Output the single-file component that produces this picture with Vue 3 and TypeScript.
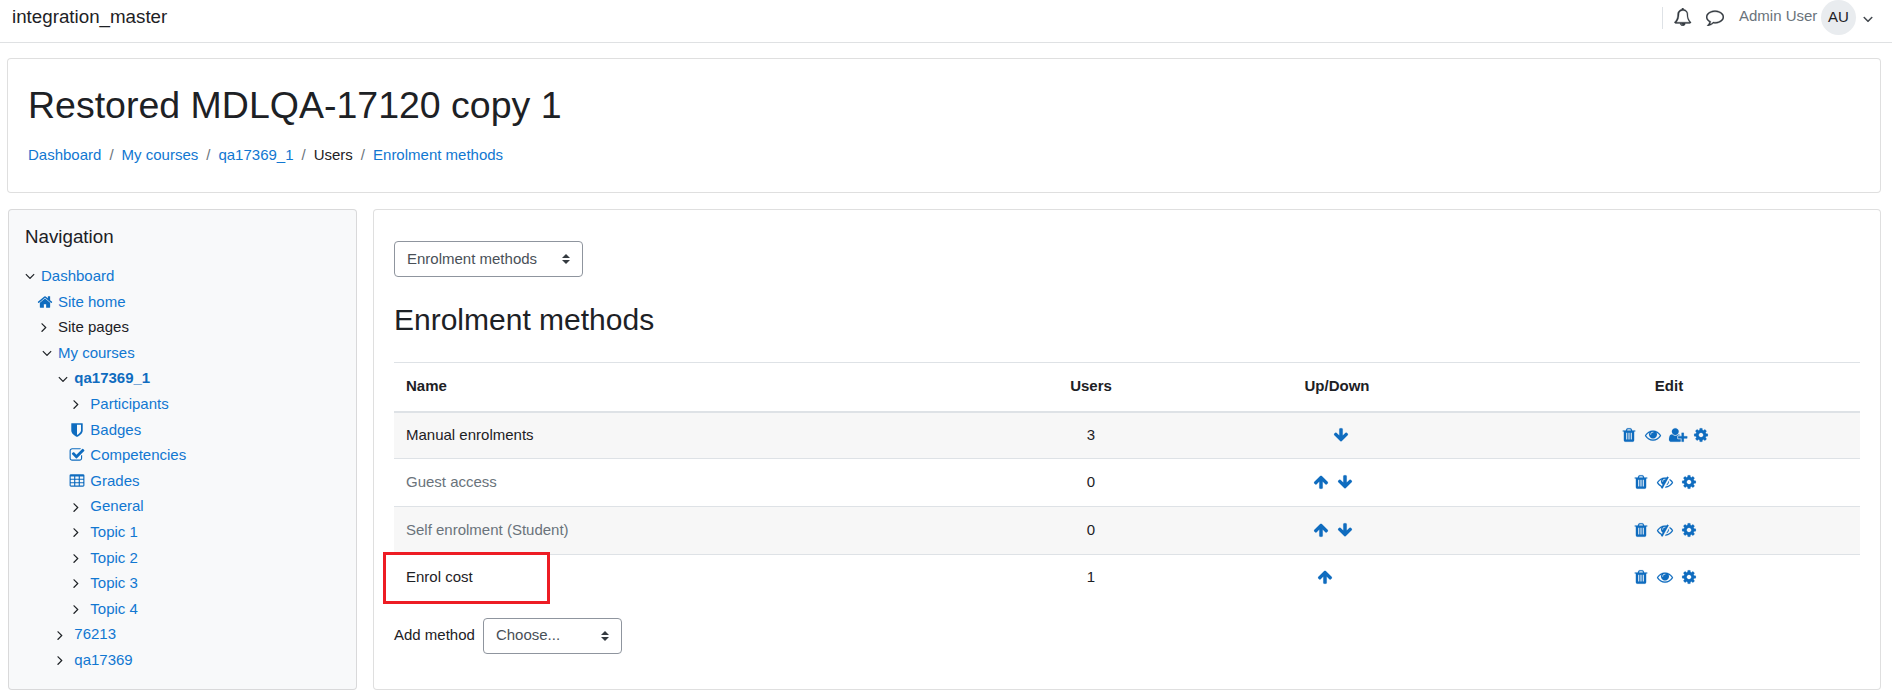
<script setup lang="ts">
type IconName =
  | 'bell' | 'comment' | 'home' | 'shield' | 'check' | 'table' | 'trash' | 'eye' | 'eyeSlash'
  | 'cog' | 'up' | 'down' | 'userPlus' | 'angleDown' | 'angleRight'

const paths: Record<IconName, string> = {
  bell: 'M912 1696q0-16-16-16-59 0-101.5-42.5t-42.5-101.5q0-16-16-16t-16 16q0 73 51.5 124.5t124.5 51.5q16 0 16-16zm-666-288h1300q-266-300-266-832 0-51-24-105t-69-103-121.5-80.5-169.5-31.5-169.5 31.5-121.5 80.5-69 103-24 105q0 532-266 832zm1454 0q0 52-38 90t-90 38h-448q0 106-75 181t-181 75-181-75-75-181h-448q-52 0-90-38t-38-90q50-42 91-88t85-119.5 74.5-158.5 50-206 19.5-260q0-152 117-282.5t307-158.5q-8-19-8-39 0-40 28-68t68-28 68 28 28 68q0 20-8 39 190 28 307 158.5t117 282.5q0 139 19.5 260t50 206 74.5 158.5 85 119.5 91 88z',
  comment: 'M896 384q-204 0-381.5 69.5t-282 187.5-104.5 255q0 112 71.5 213.5t201.5 175.5l87 50-27 96q-24 91-70 172 152-63 275-171l43-38 57 6q69 8 130 8 204 0 381.5-69.5t282-187.5 104.5-255-104.5-255-282-187.5-381.5-69.5zm896 512q0 174-120 321.5t-326 233-450 85.5q-70 0-145-8-198 175-460 242-49 14-114 22h-5q-15 0-27-10.5t-16-27.5v-1q-3-4-.5-12t2-10 4.5-9.5l6-9 7-8.5 8-9q7-8 31-34.5t34.5-38 31-39.5 32.5-51 27-59 26-76q-157-89-247.5-220t-90.5-281q0-174 120-321.5t326-233 450-85.5 450 85.5 326 233 120 321.5z',
  home: 'M1472 992v480q0 26-19 45t-45 19h-384v-384h-256v384h-384q-26 0-45-19t-19-45v-480q0-1 .5-3t.5-3l575-474 575 474q1 2 1 6zm223-69l-62 74q-8 9-21 11h-3q-13 0-21-7l-692-577-692 577q-12 8-24 7-13-2-21-11l-62-74q-8-10-7-23.5t11-21.5l719-599q32-26 76-26t76 26l244 204v-195q0-14 9-23t23-9h192q14 0 23 9t9 23v408l219 182q10 8 11 21.5t-7 23.5z',
  shield: 'M1344 960v-640h-448v1137q119-63 213-137 235-184 235-360zm192-768v768q0 86-33.5 170.5t-83 150-118 127.5-126.5 103-121 77.5-89.5 49.5-42.5 20q-12 6-26 6t-26-6q-16-7-42.5-20t-89.5-49.5-121-77.5-126.5-103-118-127.5-83-150-33.5-170.5v-768q0-26 19-45t45-19h1152q26 0 45 19t19 45z',
  check: 'M1472 930v318q0 119-84.5 203.5t-203.5 84.5h-832q-119 0-203.5-84.5t-84.5-203.5v-832q0-119 84.5-203.5t203.5-84.5h832q63 0 117 25 15 7 18 23 3 17-9 29l-49 49q-10 10-23 10-3 0-9-2-23-6-45-6h-832q-66 0-113 47t-47 113v832q0 66 47 113t113 47h832q66 0 113-47t47-113v-254q0-13 9-22l64-64q10-10 23-10 6 0 12 3 20 8 20 29zm231-489l-814 814q-24 24-57 24t-57-24l-430-430q-24-24-24-57t24-57l110-110q24-24 57-24t57 24l263 263 647-647q24-24 57-24t57 24l110 110q24 24 24 57t-24 57z',
  table: 'M576 1376v-192q0-14-9-23t-23-9h-320q-14 0-23 9t-9 23v192q0 14 9 23t23 9h320q14 0 23-9t9-23zm0-384v-192q0-14-9-23t-23-9h-320q-14 0-23 9t-9 23v192q0 14 9 23t23 9h320q14 0 23-9t9-23zm512 384v-192q0-14-9-23t-23-9h-320q-14 0-23 9t-9 23v192q0 14 9 23t23 9h320q14 0 23-9t9-23zm-512-768v-192q0-14-9-23t-23-9h-320q-14 0-23 9t-9 23v192q0 14 9 23t23 9h320q14 0 23-9t9-23zm512 384v-192q0-14-9-23t-23-9h-320q-14 0-23 9t-9 23v192q0 14 9 23t23 9h320q14 0 23-9t9-23zm512 384v-192q0-14-9-23t-23-9h-320q-14 0-23 9t-9 23v192q0 14 9 23t23 9h320q14 0 23-9t9-23zm-512-768v-192q0-14-9-23t-23-9h-320q-14 0-23 9t-9 23v192q0 14 9 23t23 9h320q14 0 23-9t9-23zm512 384v-192q0-14-9-23t-23-9h-320q-14 0-23 9t-9 23v192q0 14 9 23t23 9h320q14 0 23-9t9-23zm0-384v-192q0-14-9-23t-23-9h-320q-14 0-23 9t-9 23v192q0 14 9 23t23 9h320q14 0 23-9t9-23zm128-320v1088q0 66-47 113t-113 47h-1344q-66 0-113-47t-47-113v-1088q0-66 47-113t113-47h1344q66 0 113 47t47 113z',
  trash: 'M704 1376v-704q0-14-9-23t-23-9h-64q-14 0-23 9t-9 23v704q0 14 9 23t23 9h64q14 0 23-9t9-23zm256 0v-704q0-14-9-23t-23-9h-64q-14 0-23 9t-9 23v704q0 14 9 23t23 9h64q14 0 23-9t9-23zm256 0v-704q0-14-9-23t-23-9h-64q-14 0-23 9t-9 23v704q0 14 9 23t23 9h64q14 0 23-9t9-23zm-544-992h448l-48-117q-7-9-17-11h-317q-10 2-17 11zm928 32v64q0 14-9 23t-23 9h-96v948q0 83-47 143.5t-113 60.5h-832q-66 0-113-58.5t-47-141.5v-952h-96q-14 0-23-9t-9-23v-64q0-14 9-23t23-9h309l70-167q15-37 54-63t79-26h320q40 0 79 26t54 63l70 167h309q14 0 23 9t9 23z',
  eye: 'M1664 960q-152-236-381-353 61 104 61 225 0 185-131.5 316.5t-316.5 131.5-316.5-131.5-131.5-316.5q0-121 61-225-229 117-381 353 133 205 333.5 326.5t434.5 121.5 434.5-121.5 333.5-326.5zm-720-384q0-20-14-34t-34-14q-125 0-214.5 89.5t-89.5 214.5q0 20 14 34t34 14 34-14 14-34q0-86 61-147t147-61q20 0 34-14t14-34zm848 384q0 34-20 69-140 230-376.5 368.5t-499.5 138.5-499.5-139-376.5-368q-20-35-20-69t20-69q140-229 376.5-368t499.5-139 499.5 139 376.5 368q20 35 20 69z',
  eyeSlash: 'M555 1335l78-141q-87-63-136-159t-49-203q0-121 61-225-229 117-381 353 167 258 427 375zm389-759q0-20-14-34t-34-14q-125 0-214.5 89.5t-89.5 214.5q0 20 14 34t34 14 34-14 14-34q0-86 61-147t147-61q20 0 34-14t14-34zm363-191q0 7-1 9-106 189-316 567t-315 566l-49 89q-10 16-28 16-12 0-134-70-16-10-16-28 0-12 44-87-143-65-263.5-173t-208.5-245q-20-31-20-69t20-69q153-235 380-371t496-136q89 0 180 17l54-97q10-16 28-16 5 0 18 6t31 15.5 33 18.5 31.5 18.5 19.5 11.5q16 10 16 27zm37 447q0 139-79 253.5t-209 164.5l280-502q8 45 8 84zm448 128q0 35-20 69-39 64-109 145-150 172-347.5 267t-419.5 95l74-132q212-18 392.5-137t301.5-307q-115-179-282-294l63-112q95 64 182.5 153t144.5 184q20 34 20 69z',
  cog: 'M1152 896q0-106-75-181t-181-75-181 75-75 181 75 181 181 75 181-75 75-181zm512-109v222q0 12-8 23t-20 13l-185 28q-19 54-39 91 35 50 107 138 10 12 10 25t-9 23q-27 37-99 108t-94 71q-12 0-26-9l-138-108q-44 23-91 38-16 136-29 186-7 28-36 28h-222q-14 0-24.5-8.5t-11.5-21.5l-28-184q-49-16-90-37l-141 107q-10 9-25 9-14 0-25-11-126-114-165-168-7-10-7-23 0-12 8-23 15-21 51-66.5t54-70.5q-27-50-41-99l-183-27q-13-2-21-12.5t-8-23.5v-222q0-12 8-23t19-13l186-28q14-46 39-92-40-57-107-138-10-12-10-24 0-10 9-23 26-36 98.5-107.5t94.5-71.5q13 0 26 10l138 107q44-23 91-38 16-136 29-186 7-28 36-28h222q14 0 24.5 8.5t11.5 21.5l28 184q49 16 90 37l142-107q9-9 24-9 13 0 25 10 129 119 165 170 7 8 7 22 0 12-8 23-15 21-51 66.5t-54 70.5q26 50 41 98l183 28q13 2 21 12.5t8 23.5z',
  up: 'M1675 971q0 51-37 90l-75 75q-38 38-91 38-54 0-90-38l-294-293v704q0 52-37.5 84.5t-90.5 32.5h-128q-53 0-90.5-32.5t-37.5-84.5v-704l-294 293q-36 38-90 38t-90-38l-75-75q-38-38-38-90 0-53 38-91l651-651q35-37 90-37 54 0 91 37l651 651q37 39 37 91z',
  down: 'M1675 832q0 53-37 90l-651 652q-39 37-91 37-53 0-90-37l-651-652q-38-36-38-90 0-53 38-91l74-75q39-37 91-37 53 0 90 37l294 294v-704q0-52 38-90t90-38h128q52 0 90 38t38 90v704l294-294q37-37 90-37 52 0 91 37l75 75q37 39 37 91z',
  userPlus: 'M704 896q-159 0-271.5-112.5t-112.5-271.5 112.5-271.5 271.5-112.5 271.5 112.5 112.5 271.5-112.5 271.5-271.5 112.5zm960 128h352q13 0 22.5 9.5t9.5 22.5v192q0 13-9.5 22.5t-22.5 9.5h-352v352q0 13-9.5 22.5t-22.5 9.5h-192q-13 0-22.5-9.5t-9.5-22.5v-352h-352q-13 0-22.5-9.5t-9.5-22.5v-192q0-13 9.5-22.5t22.5-9.5h352v-352q0-13 9.5-22.5t22.5-9.5h192q13 0 22.5 9.5t9.5 22.5v352zm-736 224q0 52 38 90t90 38h256v238q-68 50-171 50h-874q-121 0-194-69t-73-190q0-53 3.5-103.5t14-109 26.5-108.5 43-97.5 62-81 85.5-53.5 111.5-20q19 0 39 17 79 61 154.5 91.5t164.5 30.5 164.5-30.5 154.5-91.5q20-17 39-17 132 0 217 96h-223q-52 0-90 38t-38 90v192z',
  angleDown: 'M1395 736q0 13-10 23l-466 466q-10 10-23 10t-23-10l-466-466q-10-10-10-23t10-23l50-50q10-10 23-10t23 10l393 393 393-393q10-10 23-10t23 10l50 50q10 10 10 23z',
  angleRight: 'M1171 960q0 13-10 23l-466 466q-10 10-23 10t-23-10l-50-50q-10-10-10-23t10-23l393-393-393-393q-10-10-10-23t10-23l50-50q10-10 23-10t23 10l466 466q10 10 10 23z',
}

interface TreeRow {
  label: string
  level: number
  icon: IconName
  link?: boolean
  bold?: boolean
}

const tree: TreeRow[] = [
  { label: 'Dashboard', level: 0, icon: 'angleDown', link: true },
  { label: 'Site home', level: 1, icon: 'home', link: true },
  { label: 'Site pages', level: 1, icon: 'angleRight' },
  { label: 'My courses', level: 1, icon: 'angleDown', link: true },
  { label: 'qa17369_1', level: 2, icon: 'angleDown', link: true, bold: true },
  { label: 'Participants', level: 3, icon: 'angleRight', link: true },
  { label: 'Badges', level: 3, icon: 'shield', link: true },
  { label: 'Competencies', level: 3, icon: 'check', link: true },
  { label: 'Grades', level: 3, icon: 'table', link: true },
  { label: 'General', level: 3, icon: 'angleRight', link: true },
  { label: 'Topic 1', level: 3, icon: 'angleRight', link: true },
  { label: 'Topic 2', level: 3, icon: 'angleRight', link: true },
  { label: 'Topic 3', level: 3, icon: 'angleRight', link: true },
  { label: 'Topic 4', level: 3, icon: 'angleRight', link: true },
  { label: '76213', level: 2, icon: 'angleRight', link: true },
  { label: 'qa17369', level: 2, icon: 'angleRight', link: true },
]

interface Method {
  name: string
  users: number
  muted?: boolean
  moves: (IconName | 'gap')[]
  edit: IconName[]
}

const methods: Method[] = [
  { name: 'Manual enrolments', users: 3, moves: ['gap', 'down'], edit: ['trash', 'eye', 'userPlus', 'cog'] },
  { name: 'Guest access', users: 0, muted: true, moves: ['up', 'down'], edit: ['trash', 'eyeSlash', 'cog'] },
  { name: 'Self enrolment (Student)', users: 0, muted: true, moves: ['up', 'down'], edit: ['trash', 'eyeSlash', 'cog'] },
  { name: 'Enrol cost', users: 1, moves: ['up', 'gap'], edit: ['trash', 'eye', 'cog'] },
]

const crumbs: { label: string; link: boolean }[] = [
  { label: 'Dashboard', link: true },
  { label: 'My courses', link: true },
  { label: 'qa17369_1', link: true },
  { label: 'Users', link: false },
  { label: 'Enrolment methods', link: true },
]
</script>

<template>
  <div class="page">
    <header class="topbar">
      <span class="brand">integration_master</span>
      <div class="usernav">
        <span class="divider"></span>
        <svg class="topicon bell" viewBox="0 0 1792 1792"><path :d="paths.bell" /></svg>
        <svg class="topicon comment" viewBox="0 0 1792 1792"><path :d="paths.comment" /></svg>
        <span class="username">Admin User</span>
        <span class="avatar">AU</span>
        <svg class="topicon caret" viewBox="0 0 1792 1792"><path :d="paths.angleDown" /></svg>
      </div>
    </header>

    <section class="card pagehead">
      <h1>Restored MDLQA-17120 copy 1</h1>
      <nav class="crumbs">
        <template v-for="(c, i) in crumbs" :key="c.label">
          <span v-if="i > 0" class="sep">/</span>
          <a :class="{ plain: !c.link }">{{ c.label }}</a>
        </template>
      </nav>
    </section>

    <div class="columns">
      <aside class="card navblock">
        <h5>Navigation</h5>
        <ul class="tree">
          <li v-for="row in tree" :key="row.label" :class="['row', 'lvl' + row.level]">
            <svg
              :class="['treeicon', row.icon]"
              viewBox="0 0 1792 1792"
            ><path :d="paths[row.icon]" /></svg>
            <a :class="{ plain: !row.link, bold: row.bold }">{{ row.label }}</a>
          </li>
        </ul>
      </aside>

      <main class="card content">
        <select class="select first">
          <option>Enrolment methods</option>
        </select>
        <h2>Enrolment methods</h2>
        <table>
          <thead>
            <tr>
              <th class="name">Name</th>
              <th class="users">Users</th>
              <th class="updown">Up/Down</th>
              <th class="edit">Edit</th>
            </tr>
          </thead>
          <tbody>
            <tr v-for="m in methods" :key="m.name">
              <td class="name" :class="{ muted: m.muted }">{{ m.name }}</td>
              <td class="users">{{ m.users }}</td>
              <td class="updown">
                <span class="icons">
                  <template v-for="(ic, i) in m.moves" :key="i">
                    <span v-if="ic === 'gap'" class="spacer"></span>
                    <svg v-else class="act" viewBox="0 0 1792 1792"><path :d="paths[ic]" /></svg>
                  </template>
                </span>
              </td>
              <td class="edit">
                <span class="icons">
                  <svg v-for="(ic, i) in m.edit" :key="i" class="act" viewBox="0 0 1792 1792"><path :d="paths[ic]" /></svg>
                </span>
              </td>
            </tr>
          </tbody>
        </table>
        <div class="addmethod">
          <label>Add method</label>
          <select class="select second">
            <option>Choose...</option>
          </select>
        </div>
        <div class="annotation"></div>
      </main>
    </div>
  </div>
</template>

<style>
html, body { margin: 0; background: #fff; }
</style>

<style scoped>
.page {
  font-family: "Liberation Sans", Arial, sans-serif;
  font-size: 15px;
  line-height: 1.5;
  color: #1d2125;
  height: 699px;
  overflow: hidden;
  box-sizing: border-box;
}
a { color: #1177d1; text-decoration: none; }
a.plain { color: #1d2125; }
a.bold { font-weight: 700; color: #0f6cbf; }

.topbar {
  height: 42px;
  border-bottom: 1px solid #dfe1e3;
  display: flex;
  align-items: flex-start;
  justify-content: space-between;
  padding: 0 0 0 12px;
  box-sizing: content-box;
}
.brand { font-size: 18.75px; line-height: 28px; margin-top: 3px; }
.usernav { display: flex; align-items: center; height: 35px; width: 230px; box-sizing: border-box; }
.divider { width: 1px; height: 22px; background: #dee2e6; margin-right: 11px; }
.topicon { width: 18px; height: 18px; fill: #343a40; stroke: #343a40; stroke-width: 30; flex: none; }
.bell { margin-top: -2px; }
.comment { margin-left: 14px; margin-top: -1px; }
.username { color: #6a737b; margin-left: 15px; width: 82px; white-space: nowrap; margin-top: -2px; }
.avatar {
  width: 35px;
  height: 35px;
  border-radius: 50%;
  background: #e9ecef;
  display: flex;
  align-items: center;
  justify-content: center;
  margin-right: 4px;
}
.caret { width: 16px; height: 16px; margin-top: 2px; }

.card {
  background: #fff;
  border: 1px solid rgba(0, 0, 0, 0.125);
  border-radius: 4px;
  box-sizing: border-box;
}
.pagehead {
  margin: 15px 11px 0 7px;
  height: 135px;
  padding: 20px 20px 0 20px;
}
h1 { margin: 0; font-size: 37.5px; font-weight: 400; line-height: 1.2; padding-top: 4px; }
.crumbs { margin-top: 16px; display: flex; }
.sep { color: #6a737b; padding: 0 8px; }

.columns { display: flex; gap: 16px; margin: 16px 11px 0 8px; height: 481px; }
.navblock {
  width: 349px;
  flex: none;
  background: #f8f9fa;
  padding: 16px 0 0 16px;
}
h5 { margin: 0; font-size: 18.75px; font-weight: 400; line-height: 1.2; }
.tree { list-style: none; margin: 15px 0 0 -8px; padding: 0; }
.row { height: 25.6px; display: flex; align-items: center; white-space: nowrap; }
.lvl0 { padding-left: 3px; }
.lvl1 { padding-left: 20px; }
.lvl2 { padding-left: 36.3px; }
.lvl3 { padding-left: 52.3px; }
.treeicon { width: 16px; height: 16px; flex: none; margin-right: 5px; fill: #0f6cbf; }
.treeicon.angleDown { fill: #1d2125; transform: translateX(2px); }
.treeicon.angleRight { fill: #1d2125; transform: translateX(-1px); }

.content { flex: 1; padding: 31px 20px 0; position: relative; }
.select {
  display: block;
  height: 36px;
  appearance: none;
  -webkit-appearance: none;
  box-sizing: border-box;
  border: 1px solid #8f959e;
  border-radius: 4px;
  color: #495057;
  font: inherit;
  padding: 0 28px 0 12px;
  background: #fff url("data:image/svg+xml,%3csvg xmlns='http://www.w3.org/2000/svg' width='4' height='5' viewBox='0 0 4 5'%3e%3cpath fill='%23343a40' d='M2 0L0 2h4zm0 5L0 3h4z'/%3e%3c/svg%3e") no-repeat right 12px center / 8px 10px;
}
.first { width: 189px; }
.second { width: 139px; }
h2 { margin: 25px 0 0; font-size: 30px; font-weight: 400; line-height: 1.2; }
table {
  width: 1466px;
  margin-top: 24px;
  border-collapse: collapse;
  table-layout: fixed;
}
th, td { padding: 0 12px; text-align: center; border-top: 1px solid #dee2e6; height: 48px; box-sizing: border-box; }
thead th { border-bottom: 2px solid #dee2e6; font-weight: 700; height: 49px; padding-bottom: 2px; }
tbody tr:first-child td, tbody tr:last-child td { height: 47px; }
tbody tr:last-child td { padding-bottom: 2px; }
.name { width: 592px; text-align: left; }
.users { width: 210px; }
.updown { width: 282px; }
.edit { width: 382px; }
.muted { color: #6a737b; }
tbody tr:nth-child(odd) td { background: #f7f7f7; }
tbody tr:last-child td { background: #fff; }
.icons { display: inline-flex; align-items: center; vertical-align: middle; margin-top: -2px; }
.act { width: 16px; height: 16px; margin-right: 8px; fill: #0f6cbf; stroke: #0f6cbf; stroke-width: 14; overflow: visible; flex: none; }
.spacer { width: 16px; height: 16px; }
.addmethod { display: flex; align-items: center; gap: 8px; margin-top: 16px; }
.annotation {
  position: absolute;
  left: 9px;
  top: 342px;
  width: 167px;
  height: 52px;
  border: 3px solid #ed1c24;
  box-sizing: border-box;
  pointer-events: none;
}
</style>
